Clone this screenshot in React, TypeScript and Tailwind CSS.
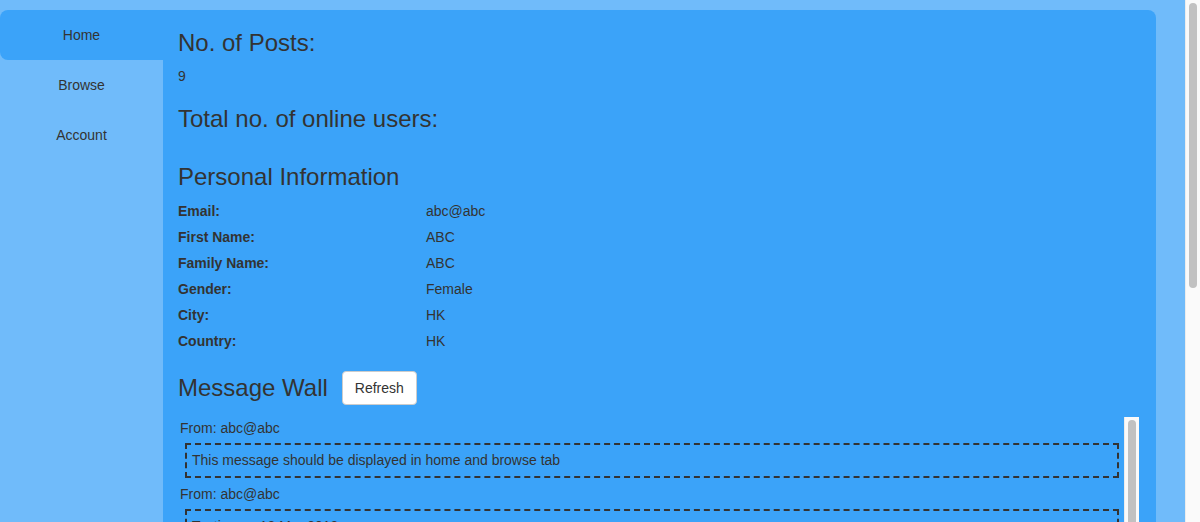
const font = { fontFamily: '"Liberation Sans", Arial, sans-serif' };

const tabs = ['Home', 'Browse', 'Account'];

const info: [string, string][] = [
  ['Email:', 'abc@abc'],
  ['First Name:', 'ABC'],
  ['Family Name:', 'ABC'],
  ['Gender:', 'Female'],
  ['City:', 'HK'],
  ['Country:', 'HK'],
];

const messages = [
  { from: 'abc@abc', text: 'This message should be displayed in home and browse tab' },
  { from: 'abc@abc', text: 'Testing on 12 Mar 2018' },
];

function Scrollbar({ thumbTop, thumbHeight }: { thumbTop: number; thumbHeight: number }) {
  return (
    <div className="relative w-[15px] shrink-0 border-l border-[#ececec] bg-[#fafafa]">
      <div
        className="absolute left-[3px] w-[8px] rounded-full bg-[#c1c1c1]"
        style={{ top: thumbTop, height: thumbHeight }}
      />
    </div>
  );
}

export default function App() {
  return (
    <div
      className="flex h-[522px] w-[1200px] overflow-hidden bg-[#70bbfa] text-[14px] leading-[20px] text-[#333]"
      style={font}
    >
      <div className="flex w-[1185px] shrink-0 pt-[10px]">
        <nav className="w-[163px] shrink-0">
          {tabs.map((t, i) => (
            <div
              key={t}
              className={`flex h-[50px] items-center justify-center ${
                i === 0 ? 'rounded-l-lg bg-[#3ba3f9]' : ''
              }`}
            >
              {t}
            </div>
          ))}
        </nav>

        <main className="mr-[29px] flex flex-1 flex-col rounded-tr-lg bg-[#3ba3f9] pl-[15px] pr-[17px]">
          <h3 className="mt-[20px] mb-[10px] text-[24px] leading-[26px]">No. of Posts:</h3>
          <div>9</div>
          <h3 className="mt-[20px] mb-[10px] text-[24px] leading-[26px]">Total no. of online users:</h3>
          <div />
          <h3 className="mt-[22px] mb-[8px] text-[24px] leading-[26px]">Personal Information</h3>
          <div className="flex flex-col">
            {info.map(([k, v]) => (
              <div key={k} className="flex h-[26px] items-center">
                <span className="w-[248px] font-bold">{k}</span>
                <span>{v}</span>
              </div>
            ))}
          </div>

          <div className="mt-[17px] flex items-center gap-[14px]">
            <h3 className="text-[24px] leading-[26px]">Message Wall</h3>
            <button className="h-[34px] rounded border border-[#ccc] bg-white px-[12px] text-[14px] text-[#333]">
              Refresh
            </button>
          </div>

          <div className="mt-[12px] flex flex-1">
            <div className="flex-1 pl-[2px]">
              {messages.map((m, i) => (
                <div key={i}>
                  <div className="pt-[1px]">From: {m.from}</div>
                  <div className="mx-[5px] my-[5px] border-2 border-dashed border-[#333] px-[5px] pt-[5px] pb-[6px]">
                    {m.text}
                  </div>
                </div>
              ))}
            </div>
            <Scrollbar thumbTop={3} thumbHeight={300} />
          </div>
        </main>
      </div>
      <Scrollbar thumbTop={3} thumbHeight={285} />
    </div>
  );
}
